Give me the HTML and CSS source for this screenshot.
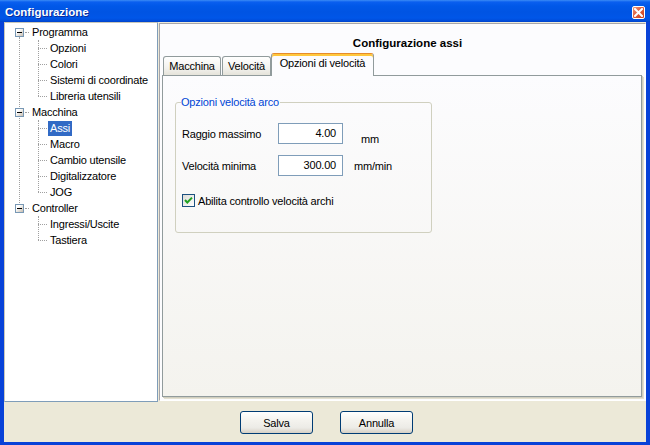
FILE: index.html
```html
<!DOCTYPE html>
<html lang="it">
<head>
<meta charset="utf-8">
<title>Configurazione</title>
<link rel="stylesheet" href="styles.css">
</head>
<body>
<div class="window">
  <div class="titlebar">
    <span class="title">Configurazione</span>
    <span class="close">
      <svg width="9" height="9" viewBox="0 0 9 9"><path d="M1 1 L8 8 M8 1 L1 8" stroke="#fff" stroke-width="2" stroke-linecap="square" fill="none"/></svg>
    </span>
  </div>
  <div class="frame">
    <div class="main">
      <div class="tree">
        <div class="group">
          <div class="root-row"><span class="expander"><span class="minus"></span></span><span class="root-h"></span><span class="label">Programma</span></div>
          <div class="children">
            <div class="child-row"><span class="child-h"></span><span class="label">Opzioni</span></div>
            <div class="child-row"><span class="child-h"></span><span class="label">Colori</span></div>
            <div class="child-row"><span class="child-h"></span><span class="label">Sistemi di coordinate</span></div>
            <div class="child-row"><span class="child-h"></span><span class="label">Libreria utensili</span></div>
          </div>
        </div>
        <div class="group">
          <div class="root-row"><span class="expander"><span class="minus"></span></span><span class="root-h"></span><span class="label">Macchina</span></div>
          <div class="children">
            <div class="child-row"><span class="child-h"></span><span class="label selected">Assi</span></div>
            <div class="child-row"><span class="child-h"></span><span class="label">Macro</span></div>
            <div class="child-row"><span class="child-h"></span><span class="label">Cambio utensile</span></div>
            <div class="child-row"><span class="child-h"></span><span class="label">Digitalizzatore</span></div>
            <div class="child-row"><span class="child-h"></span><span class="label">JOG</span></div>
          </div>
        </div>
        <div class="group">
          <div class="root-row"><span class="expander"><span class="minus"></span></span><span class="root-h"></span><span class="label">Controller</span></div>
          <div class="children">
            <div class="child-row"><span class="child-h"></span><span class="label">Ingressi/Uscite</span></div>
            <div class="child-row"><span class="child-h"></span><span class="label">Tastiera</span></div>
          </div>
        </div>
      </div>
      <div class="panel">
        <div class="heading">Configurazione assi</div>
        <div class="tabs">
          <div class="tab tab-macchina">Macchina</div>
          <div class="tab tab-velocita">Velocità</div>
          <div class="tab tab-opzioni active">Opzioni di velocità</div>
        </div>
        <div class="page">
          <fieldset class="group-box">
            <legend>Opzioni velocità arco</legend>
            <div class="fields">
              <span class="field-label">Raggio massimo</span>
              <span class="input">4.00</span>
              <span class="unit unit-mm">mm</span>
              <span class="field-label">Velocità minima</span>
              <span class="input">300.00</span>
              <span class="unit unit-mmmin">mm/min</span>
            </div>
            <div class="check-row">
              <span class="checkbox">
                <svg width="11" height="11" viewBox="0 0 11 11"><path d="M2 5 L4.3 7.5 L9 2.6" stroke="#21A121" stroke-width="2" fill="none"/></svg>
              </span>
              <span class="check-label">Abilita controllo velocità archi</span>
            </div>
          </fieldset>
        </div>
      </div>
    </div>
    <div class="footer">
      <button class="btn">Salva</button>
      <button class="btn">Annulla</button>
    </div>
  </div>
</div>
</body>
</html>
```
FILE: styles.css
```css
* { box-sizing: border-box; }
html, body { margin: 0; padding: 0; }
body {
  width: 650px;
  height: 445px;
  overflow: hidden;
  font-family: "Liberation Sans", Arial, sans-serif;
  font-size: 11px;
  letter-spacing: -0.2px;
  color: #000;
  background: #ECE9D8;
}
.window {
  width: 650px;
  height: 445px;
  display: flex;
  flex-direction: column;
}
.titlebar {
  height: 22px;
  flex: 0 0 22px;
  display: flex;
  align-items: center;
  background: linear-gradient(#3B8CF5 0px, #0A5FEF 2px, #0058E8 6px, #0054E3 12px, #0056E8 18px, #004BD8 21px, #0040C8 22px);
  padding: 1px 0 0 5px;
}
.title {
  color: #fff;
  font-weight: bold;
  font-size: 11.5px;
  letter-spacing: 0;
  text-shadow: 1px 1px 0 #0A2C9A;
}
.close {
  margin-left: auto;
  margin-right: 5px;
  margin-top: 1px;
  width: 13px;
  height: 13px;
  border: 1px solid #fff;
  border-radius: 2px;
  background: linear-gradient(135deg, #EE9B7E 0%, #E0603E 45%, #C8401E 100%);
  display: flex;
  align-items: center;
  justify-content: center;
}
.close svg { display: block; }
.frame {
  flex: 1;
  display: flex;
  flex-direction: column;
  background: #ECE9D8;
  border-left: 4px solid #0842D8;
  border-right: 4px solid #0842D8;
  border-bottom: 3px solid #0842D8;
}
.main {
  height: 380px;
  flex: 0 0 380px;
  display: flex;
}
.tree {
  position: relative;
  width: 154px;
  flex: 0 0 154px;
  background: #fff;
  border-top: 1px solid #C9C7BA;
  border-left: 1px solid #C9C7BA;
  border-right: 1px solid #7F9DB9;
  border-bottom: 1px solid #7F9DB9;
  padding-top: 1px;
}
.tree::before {
  content: "";
  position: absolute;
  left: 14px;
  top: 14px;
  height: 166px;
  border-left: 1px dotted #A0A0A0;
}
.root-row, .child-row {
  height: 16px;
  display: flex;
  align-items: center;
}
.expander {
  position: relative;
  z-index: 1;
  width: 9px;
  height: 9px;
  margin-left: 10px;
  border: 1px solid #7898B5;
  background: linear-gradient(135deg, #FFFFFF 30%, #C6BCAE 100%);
  display: flex;
  align-items: center;
  justify-content: center;
}
.minus {
  width: 5px;
  height: 1px;
  background: #000;
}
.root-h {
  width: 4px;
  border-top: 1px dotted #A0A0A0;
  margin-left: 1px;
}
.children { position: relative; }
.children::before {
  content: "";
  position: absolute;
  left: 33px;
  top: 0;
  bottom: 8px;
  border-left: 1px dotted #A0A0A0;
}
.child-row { padding-left: 33px; }
.child-h {
  width: 9px;
  border-top: 1px dotted #A0A0A0;
}
.label {
  height: 15px;
  line-height: 15px;
  padding: 0 2px;
  margin-left: 1px;
  white-space: nowrap;
}
.label.selected {
  background: #316AC5;
  color: #fff;
}
.panel {
  flex: 1;
  margin: 1px 0 1px 1px;
  display: flex;
  flex-direction: column;
  background: #FCFCFE;
  border-top: 1px solid #A7A6AA;
  border-left: 1px solid #A7A6AA;
  border-right: 1px solid #FFFFFF;
  border-bottom: 1px solid #FFFFFF;
}
.heading {
  padding: 12px 0 0 10px;
  line-height: 14px;
  height: 26px;
  text-align: center;
  font-weight: bold;
  font-size: 11.5px;
  letter-spacing: 0;
}
.tabs {
  display: flex;
  align-items: flex-end;
  margin: 3px 0 -1px 2px;
  padding-left: 1px;
  height: 23px;
}
.tab {
  height: 19px;
  margin-bottom: 1px;
  padding-top: 3px;
  line-height: 13px;
  text-align: center;
  white-space: nowrap;
  border: 1px solid #919B9C;
  border-bottom: none;
  border-radius: 3px 3px 0 0;
  background: linear-gradient(#FFFFFF, #F3F2EE 60%, #E5E3DA);
}
.tab-macchina { width: 58px; margin-right: 1px; }
.tab-velocita { width: 49px; margin-right: 0; }
.tab-opzioni { width: 103px; }
.tab.active {
  position: relative;
  z-index: 1;
  height: 23px;
  margin-bottom: 0;
  background: #FCFCFE;
  border-top: 1px solid #E68B2C;
  box-shadow: inset 0 2px 0 #FFC73C;
}
.page {
  flex: 1;
  margin: 0 3px 3px 2px;
  border: 1px solid #919B9C;
  background: linear-gradient(#FCFCFE, #F4F3EE);
  box-shadow: 1px 1px 0 #D0CEBF, 2px 2px 0 #E3E0D0;
  padding: 20px 0 0 12px;
}
.group-box {
  margin: 0;
  padding: 0 0 0 6px;
  width: 257px;
  height: 137px;
  border: 1px solid #D0D0BF;
  border-radius: 3px;
  min-width: 0;
}
.group-box legend {
  color: #0046D5;
  padding: 0 1px 0 0;
  margin-left: -1px;
  line-height: 13px;
}
.fields {
  margin-top: 14px;
  display: grid;
  grid-template-columns: 96px 65px auto;
  grid-auto-rows: 21px;
  row-gap: 11px;
  align-items: center;
}
.input {
  height: 21px;
  line-height: 19px;
  border: 1px solid #7F9DB9;
  background: #fff;
  text-align: right;
  padding-right: 6px;
}
.unit-mm {
  align-self: start;
  margin-top: 10px;
  margin-left: 18px;
}
.unit-mmmin { margin-left: 11px; }
.check-row {
  margin-top: 18px;
  display: flex;
  align-items: center;
}
.checkbox {
  width: 13px;
  height: 13px;
  border: 1px solid #1C5180;
  background: linear-gradient(135deg, #DCDCD7, #FFFFFF);
  display: flex;
  align-items: center;
  justify-content: center;
}
.checkbox svg { display: block; }
.check-label { margin-left: 3px; }
.footer {
  flex: 1;
  display: flex;
  justify-content: center;
  align-items: flex-start;
  gap: 27px;
  padding: 9px 0 0 3px;
}
.btn {
  width: 73px;
  height: 23px;
  border: 1px solid #003C74;
  border-radius: 3px;
  background: linear-gradient(#FFFFFF 0%, #F4F3EE 40%, #ECEBE6 75%, #D6D0C5 100%);
  font-family: "Liberation Sans", Arial, sans-serif;
  font-size: 11px;
  letter-spacing: -0.2px;
  color: #000;
  padding: 0;
}
```
